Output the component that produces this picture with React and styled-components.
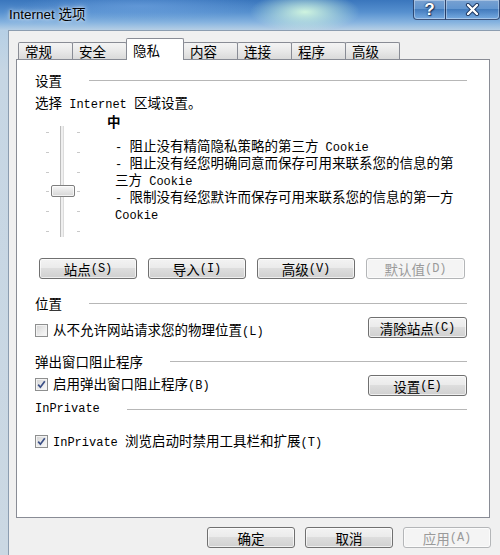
import React from "react";
import styled, { createGlobalStyle } from "styled-components";

const GlobalStyle = createGlobalStyle`
  html, body {
    margin: 0;
    padding: 0;
    background: #c8d8e6;
  }
  body {
    font-family: "Noto Sans CJK SC", "Liberation Sans", sans-serif;
    color: #000;
  }
`;

const Window = styled.div`
  width: 500px;
  height: 555px;
  overflow: hidden;
  display: flex;
  flex-direction: column;
  background:
    radial-gradient(ellipse 55px 20px at 305px 12px, rgba(220, 255, 225, 0.9), rgba(220, 255, 225, 0) 100%),
    radial-gradient(ellipse 120px 14px at 140px 6px, rgba(120, 170, 230, 0.5), rgba(120, 170, 230, 0) 100%),
    linear-gradient(180deg, #3a76bd 0px, #5690cf 12px, #84b2df 22px, #b6cfe5 30px, #c6d6e4 70px, #cbd8e3 100%);
`;

const TitleBar = styled.div`
  display: flex;
  align-items: flex-start;
  height: 30px;
  flex-shrink: 0;
`;

const Title = styled.div`
  margin: 7px 0 0 9px;
  font-family: "Liberation Sans", "Noto Sans CJK SC", sans-serif;
  font-size: 13.5px;
  line-height: 16px;
  color: #000;
  text-shadow: 0 0 6px rgba(255, 255, 255, 0.9), 0 0 3px rgba(255, 255, 255, 0.8);
`;

const Caps = styled.div`
  display: flex;
  margin-left: auto;
`;

const CapBtn = styled.div`
  box-sizing: border-box;
  width: ${(p) => p.$w}px;
  height: 20px;
  margin-left: -1px;
  border: 1px solid rgba(35, 55, 95, 0.8);
  border-top: none;
  border-radius: ${(p) => (p.$first ? "0 0 0 4px" : "0 0 4px 0")};
  background: linear-gradient(
    180deg,
    rgba(255, 255, 255, 0.32) 0%,
    rgba(255, 255, 255, 0.12) 45%,
    rgba(20, 60, 130, 0.18) 50%,
    rgba(120, 175, 235, 0.35) 100%
  );
  box-shadow: inset 0 0 0 1px rgba(255, 255, 255, 0.35);
  display: flex;
  align-items: center;
  justify-content: center;
  font-family: "Liberation Sans", sans-serif;
  font-weight: 700;
  font-size: 17px;
  color: #fff;
  text-shadow: 0 0 2px #1c3660, 0 0 1px #1c3660, 1px 1px 1px #1c3660;
`;

const Client = styled.div`
  flex: 1;
  margin-left: 8px;
  background: #f0f0f0;
  border-left: 1px solid #8c9db0;
  border-top: 1px solid #8c9db0;
  padding: 7px 0 0 7px;
  display: flex;
  flex-direction: column;
`;

const TabStrip = styled.div`
  display: flex;
  align-items: flex-end;
  height: 21px;
  margin-left: 3px;
  position: relative;
  z-index: 1;
`;

const Tab = styled.div`
  box-sizing: border-box;
  width: ${(p) => (p.$active ? 58 : 55)}px;
  height: ${(p) => (p.$active ? 22 : 17)}px;
  margin-left: -1px;
  margin-bottom: ${(p) => (p.$active ? -1 : 0)}px;
  border: 1px solid #898c95;
  border-bottom: none;
  border-radius: 2px 2px 0 0;
  background: ${(p) =>
    p.$active ? "#fff" : "linear-gradient(180deg, #f4f4f4 0%, #e9e9e9 50%, #dadada 100%)"};
  position: relative;
  z-index: ${(p) => (p.$active ? 2 : 1)};
  display: flex;
  align-items: center;
  padding-left: 6px;
  font-size: 13.5px;
  line-height: 16px;
`;

const Panel = styled.div`
  box-sizing: border-box;
  width: 474px;
  height: 459px;
  border: 1px solid #898c95;
  background: #fff;
  padding: 0 22px 0 18px;
  display: flex;
  flex-direction: column;
  font-size: 13.5px;
  line-height: 16px;
`;

const SectionHead = styled.div`
  display: flex;
  align-items: center;
  gap: 27px;
  height: 16px;
  margin-top: ${(p) => p.$mt}px;
  &::after {
    content: "";
    flex: 1;
    height: 1px;
    background: #b7b7b7;
  }
`;

const Desc = styled.div`
  height: 16px;
  margin-top: 6px;
`;

const PrivacyBox = styled.div`
  display: flex;
  height: 124px;
  margin-top: 3px;
`;

const SliderBox = styled.div`
  position: relative;
  width: 36px;
  height: 111px;
  margin: 13px 0 0 9px;
  flex-shrink: 0;
`;

const Track = styled.div`
  box-sizing: border-box;
  position: absolute;
  left: 16px;
  top: 0;
  bottom: 0;
  width: 4px;
  border-left: 1px solid #bcbcbc;
  border-right: 1px solid #dcdcdc;
  background: #efefef;
`;

const TickCol = styled.div`
  position: absolute;
  top: 6px;
  height: 100px;
  ${(p) => (p.$side === "left" ? "left: 2px;" : "right: 0;")}
  display: flex;
  flex-direction: column;
  justify-content: space-between;
`;

const Tick = styled.div`
  width: 3px;
  height: 1px;
  background: #c9c9c9;
`;

const Thumb = styled.div`
  box-sizing: border-box;
  position: absolute;
  left: 7px;
  top: ${(p) => p.$top}px;
  width: 24px;
  height: 12px;
  border: 1px solid #7e7e7e;
  border-radius: 2px;
  background: linear-gradient(180deg, #f7f7f7 0%, #e6e6e6 50%, #d6d6d6 100%);
  box-shadow: inset 0 0 0 1px rgba(255, 255, 255, 0.7);
`;

const LevelCol = styled.div`
  width: 354px;
  margin-left: 27px;
  display: flex;
  flex-direction: column;
`;

const Level = styled.div`
  font-weight: 700;
  height: 16px;
`;

const Bullets = styled.div`
  margin-top: 9px;
  padding-left: 8px;
  line-height: 14px;
`;

const ButtonRow = styled.div`
  display: flex;
  gap: 11px;
  margin: 21px 0 0 4px;
`;

const Button = styled.div`
  box-sizing: border-box;
  width: ${(p) => p.$w}px;
  height: 21px;
  border: 1px solid ${(p) => (p.$disabled ? "#b4b6b8" : "#707070")};
  border-radius: 3px;
  background: ${(p) =>
    p.$disabled
      ? "#f4f4f4"
      : "linear-gradient(180deg, #f3f3f3 0%, #ebebeb 45%, #dddddd 50%, #d0d0d0 100%)"};
  box-shadow: inset 0 0 0 1px rgba(255, 255, 255, 0.65);
  color: ${(p) => (p.$disabled ? "#9a9a9a" : "#000")};
  display: flex;
  align-items: center;
  justify-content: center;
  font-size: 13.5px;
  line-height: 16px;
  flex-shrink: 0;
`;

const OptRow = styled.div`
  display: flex;
  align-items: flex-start;
  justify-content: space-between;
  margin-top: ${(p) => p.$mt}px;
`;

const CheckLabel = styled.div`
  display: flex;
  align-items: center;
  gap: 5px;
  height: 14px;
  line-height: 14px;
  margin-top: ${(p) => p.$mt || 0}px;
`;

const Box = styled.span`
  box-sizing: border-box;
  width: 13px;
  height: 13px;
  border: 1px solid #8e8f8f;
  background: linear-gradient(135deg, #d2d2d2 0%, #e9e9e9 50%, #fbfbfb 100%);
  box-shadow: inset 0 0 0 1px #f3f3f3;
  display: inline-flex;
  align-items: center;
  justify-content: center;
  flex-shrink: 0;
`;

const Footer = styled.div`
  display: flex;
  justify-content: flex-end;
  gap: 10px;
  margin-top: 9px;
  padding-right: 9px;
`;

const M = styled.span`
  font-family: "Liberation Mono", monospace;
  font-size: 12px;
`;

// latin runs get the half-width mono look of NSimSun
function T({ children }) {
  const parts = String(children).split(/([\x20-\x7e]+)/).filter(Boolean);
  return parts.map((p, i) =>
    /[\x20-\x7e]/.test(p[0]) ? <M key={i}>{p}</M> : <React.Fragment key={i}>{p}</React.Fragment>
  );
}

function Check({ checked, label, mt }) {
  return (
    <CheckLabel $mt={mt}>
      <Box>
        {checked && (
          <svg width="9" height="9" viewBox="0 0 9 9">
            <path d="M1.2 4.6 L3.4 7.2 L7.8 1.2" fill="none" stroke="#3b4f86" strokeWidth="1.7" />
          </svg>
        )}
      </Box>
      <span>
        <T>{label}</T>
      </span>
    </CheckLabel>
  );
}

const tabs = ["常规", "安全", "隐私", "内容", "连接", "程序", "高级"];

const bullets = [
  "- 阻止没有精简隐私策略的第三方 Cookie",
  "- 阻止没有经您明确同意而保存可用来联系您的信息的第三方 Cookie",
  "- 限制没有经您默许而保存可用来联系您的信息的第一方 Cookie",
];

export default function App() {
  return (
    <>
      <GlobalStyle />
      <Window>
        <TitleBar>
          <Title>Internet 选项</Title>
          <Caps>
            <CapBtn $w={33} $first>?</CapBtn>
            <CapBtn $w={55}>
              <svg width="15" height="13" viewBox="0 0 15 13">
                <path d="M3 2 L12 11 M12 2 L3 11" stroke="#1c3660" strokeWidth="4.2" strokeLinecap="round" />
                <path d="M3 2 L12 11 M12 2 L3 11" stroke="#fff" strokeWidth="2.4" strokeLinecap="round" />
              </svg>
            </CapBtn>
          </Caps>
        </TitleBar>
        <Client>
          <TabStrip>
            {tabs.map((t) => (
              <Tab key={t} $active={t === "隐私"}>
                {t}
              </Tab>
            ))}
          </TabStrip>
          <Panel>
            <SectionHead $mt={12}>设置</SectionHead>
            <Desc>
              <T>选择 Internet 区域设置。</T>
            </Desc>
            <PrivacyBox>
              <SliderBox>
                <TickCol $side="left">
                  {[0, 1, 2, 3, 4, 5].map((i) => (
                    <Tick key={i} />
                  ))}
                </TickCol>
                <Track />
                <TickCol $side="right">
                  {[0, 1, 2, 3, 4, 5].map((i) => (
                    <Tick key={i} />
                  ))}
                </TickCol>
                <Thumb $top={59} />
              </SliderBox>
              <LevelCol>
                <Level>中</Level>
                <Bullets>
                  {bullets.map((b) => (
                    <div key={b}>
                      <T>{b}</T>
                    </div>
                  ))}
                </Bullets>
              </LevelCol>
            </PrivacyBox>
            <ButtonRow>
              <Button $w={98}><T>站点(S)</T></Button>
              <Button $w={98}><T>导入(I)</T></Button>
              <Button $w={98}><T>高级(V)</T></Button>
              <Button $w={99} $disabled><T>默认值(D)</T></Button>
            </ButtonRow>

            <SectionHead $mt={16}>位置</SectionHead>
            <OptRow $mt={6}>
              <Check label="从不允许网站请求您的物理位置(L)" mt={6} />
              <Button $w={99}><T>清除站点(C)</T></Button>
            </OptRow>

            <SectionHead $mt={15}>弹出窗口阻止程序</SectionHead>
            <OptRow $mt={6}>
              <Check checked label="启用弹出窗口阻止程序(B)" mt={2} />
              <Button $w={99}><T>设置(E)</T></Button>
            </OptRow>

            <SectionHead $mt={5}>
              <M>InPrivate</M>
            </SectionHead>
            <OptRow $mt={17}>
              <Check checked label="InPrivate 浏览启动时禁用工具栏和扩展(T)" />
            </OptRow>
          </Panel>
          <Footer>
            <Button $w={88}>确定</Button>
            <Button $w={88}>取消</Button>
            <Button $w={88} $disabled><T>应用(A)</T></Button>
          </Footer>
        </Client>
      </Window>
    </>
  );
}
